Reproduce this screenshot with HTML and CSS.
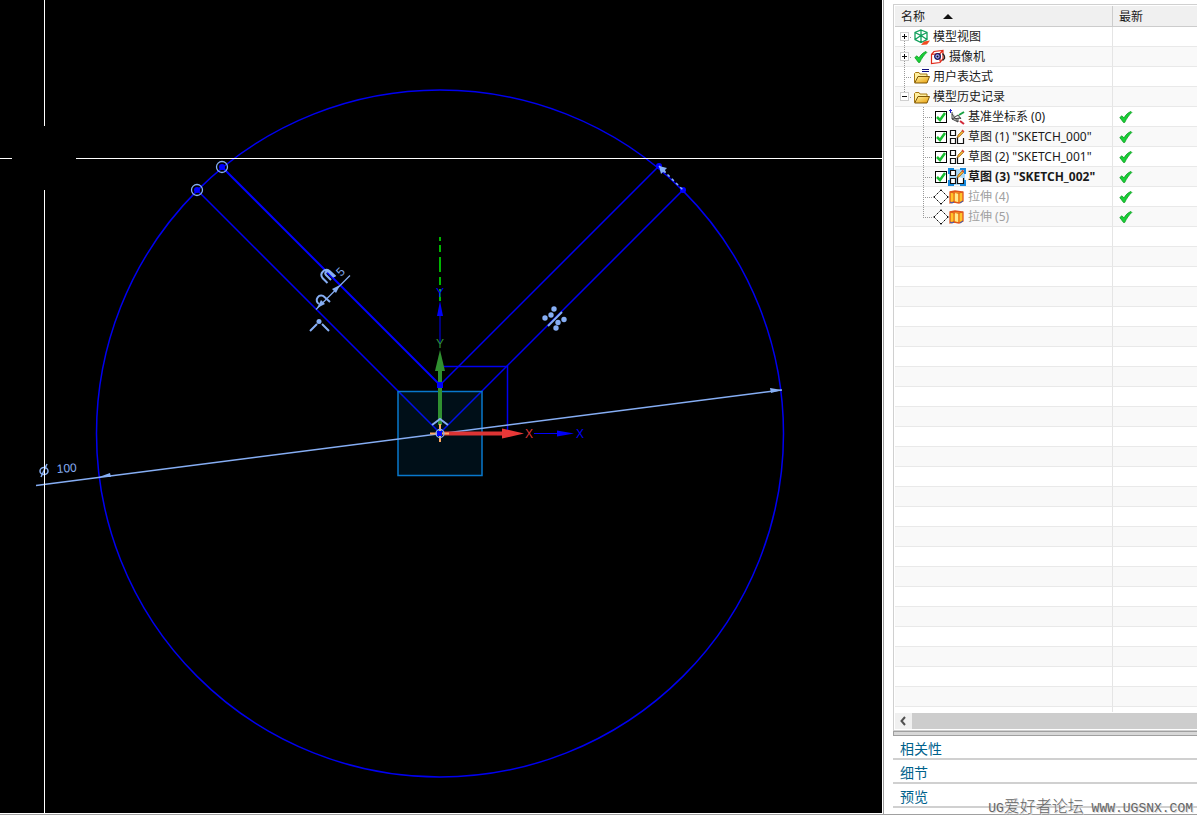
FILE: index.html
```
<!DOCTYPE html>
<html lang="zh-CN">
<head>
  <meta charset="utf-8">
  <title>部件导航器</title>
  <link rel="stylesheet" href="styles.css">
</head>
<body>
  <svg class="symbols" aria-hidden="true">
    <symbol id="tick" viewBox="0 0 14 14">
      <path d="M.8 7.500L3 5.800l2 2.200C6.500 5 9 2.500 12 1.500l.8 1C10 5 7.500 8.500 5.700 12.500H4.500z" fill="#18d038" stroke="#129a22" stroke-width=".8"/>
    </symbol>
    <symbol id="views" viewBox="0 0 16 16">
      <path d="M7 1l6 2.500v7L7 13.500l-6-3v-7zM1 3.500l6 3 6-3M7 1v12M1 10.500l6-4 6 4" fill="none" stroke="#12a05c" stroke-width="1.300"/>
      <path d="M7 16l3-3.500 6-1-3 4z" fill="#f04a20"/>
    </symbol>
    <symbol id="camera" viewBox="0 0 16 16">
      <path d="M1.500 5.500L4 2.500l9-1v8l-3 4-8.500 1zM1.500 5.500l8.500-1v8M10 4.500l3-3" fill="#fff" stroke="#e02818" stroke-width="1.200"/>
      <circle cx="7.500" cy="7.500" r="2.800" fill="#a8a8f0" stroke="#171760" stroke-width="1.300"/>
      <circle cx="7.500" cy="7.500" r="1" fill="#111"/>
      <path d="M12.500 4.500q2.500 2 2 5l-2 2" fill="none" stroke="#222" stroke-width="1.300"/>
    </symbol>
    <symbol id="folder" viewBox="0 0 16 16">
      <path d="M.5 13.500v-9l1-1H5l1 1.500h7v3" fill="#fff0a0" stroke="#a87810"/>
      <path d="M.7 14L4 7.500h11.500L13 14z" fill="url(#gold)" stroke="#7d5606"/>
    </symbol>
    <symbol id="csys" viewBox="0 0 16 16">
      <path d="M3 3v7l6 3V9M3 10l6-4 3 4M3 5l6 8M3 10l9-1" fill="#dde2de" stroke="#444"/>
      <path d="M1.500 0v4M0 1.500h3" stroke="#2020d0"/>
      <path d="M10 6l5-3" stroke="#18a040" stroke-width="2"/>
      <path d="M11 12l4 3" stroke="#d02838" stroke-width="2"/>
    </symbol>
    <symbol id="sketch" viewBox="0 0 16 16">
      <path d="M1.500 1.500h5v5h-5zM1.500 9.500h5v5h-5zM8.500 8v6.500h6V9" fill="#fff" stroke="#111" stroke-width="1.200"/>
      <path d="M8 9l1-3 4-4 1.500 1.500-4 4z" fill="#f0b030" stroke="#845018" stroke-width=".6"/>
      <path d="M12.500 1.500l1-1 2 2-1 1z" fill="#e04030"/>
    </symbol>
    <symbol id="extrude" viewBox="0 0 16 16">
      <path d="M1 3l5-1 8 1v9l-4 2-5-1-4 1z" fill="#ffc42a" stroke="#e0561c" stroke-width="1.300"/>
      <path d="M5 3v10M10 4v10M1 3l4 1 5 0 4-1" fill="none" stroke="#e0561c"/>
      <path d="M6 4l3 1v8l-3-1z" fill="#ffe890"/>
      <path d="M1 13q2 2 4 0M11 14l3-2" fill="none" stroke="#3060c0"/>
    </symbol>
    <linearGradient id="gold" x1="0" y1="0" x2="1" y2="1">
      <stop offset="0" stop-color="#fff3a0"/>
      <stop offset="1" stop-color="#e89c08"/>
    </linearGradient>
  </svg>

  <main class="workspace">
    <section class="viewport">
      <svg class="drawing" viewBox="0 0 882 813" preserveAspectRatio="xMinYMin slice" role="img" aria-label="SKETCH_002">
        <!-- 草图曲线 -->
        <g class="curve">
          <circle cx="440" cy="433.500" r="343.500"/>
          <path d="M197 190l243 243L683 190M440 385L659 166"/>
          <path class="thick" d="M222 167l218 218"/>
          <path d="M440 366.500h67.500V433"/>
        </g>
        <rect class="plane" x="398" y="391.500" width="84" height="84"/>

        <!-- 竖直参考轴 -->
        <path class="axis-dash" d="M440 237v4M440 245v7M440 257v15M440 277v8M440 289v12"/>

        <!-- 尺寸 100 -->
        <g class="dim">
          <path d="M36 485.500L782 390"/>
          <path class="solid" d="M99 477l11-4 1 4zM782 390l-12-2 1 5z"/>
          <ellipse cx="44" cy="471" rx="4" ry="3.500"/>
          <path d="M47 464l-6 13"/>
          <text x="57" y="473" transform="rotate(-4 57 473)" class="dim-text">100</text>
        </g>

        <!-- 草图坐标系 -->
        <g class="sketch-axis">
          <path d="M440 344V316M534 433.500h24"/>
          <path class="solid" d="M440 301l3 15h-6zM574 433.500l-17 3v-6z"/>
          <text x="440" y="297">Y</text>
          <text x="580" y="438">X</text>
        </g>
        <g class="y-axis">
          <path d="M440 425v-56" stroke-width="4"/>
          <path class="solid" d="M440 350l5 21h-10z"/>
          <text x="440" y="348">Y</text>
        </g>
        <g class="x-axis">
          <path d="M444 433.500h60" stroke-width="4"/>
          <path class="solid" d="M524 433.500l-22 5v-10z"/>
          <text x="529" y="438">X</text>
        </g>
        <path class="origin-cross" d="M430 433.500h19M440 424v18"/>
        <path class="mark" d="M432 425l8-6 8 6"/>
        <circle class="ring" cx="440" cy="433.500" r="4"/>

        <!-- 端点 -->
        <g class="point">
          <rect x="437" y="382" width="6" height="6"/>
          <rect x="437" y="431" width="5" height="5"/>
          <circle cx="222" cy="167" r="3"/>
          <circle cx="197" cy="190" r="3"/>
          <circle cx="659" cy="166" r="3"/>
          <circle cx="683" cy="190" r="3"/>
        </g>
        <circle class="ring" cx="222" cy="167" r="5.500"/>
        <circle class="ring" cx="197" cy="190" r="5.500"/>
        <path class="drag" d="M659 166l24 24"/>
        <path class="solid-mark" d="M659 166l8 2-2 2 1 3-3-1-2 2z"/>

        <!-- 约束符号与尺寸 5 -->
        <g class="mark">
          <path class="thin" d="M316 309.500L350 275.500"/>
          <path class="solid-mark" d="M340 285l-4 8-4-4zM317 308l4-8 4 4z"/>
          <path d="M327.500 283l-5-5a5 5 0 0 1 7-7l6 5.500M331 280l-5-5a2 2 0 0 1 3-3l5 5"/>
          <path d="M319 304a4.500 4.500 0 1 1 5.500-7l5.500 5"/>
          <path d="M310 331l7-7M322 324l7 7"/>
          <circle class="solid-mark" cx="319" cy="321.500" r="2.500"/>
          <path d="M548 326l14-14"/>
          <g class="solid-mark">
            <circle cx="545" cy="318" r="2.700"/>
            <circle cx="551" cy="315" r="2.700"/>
            <circle cx="554" cy="309" r="2.700"/>
            <circle cx="556" cy="328" r="2.700"/>
            <circle cx="558" cy="322.500" r="2.700"/>
            <circle cx="564" cy="319.500" r="2.700"/>
          </g>
        </g>
        <text x="341" y="277" transform="rotate(-45 341 277)" class="dim-text">5</text>

        <!-- 十字光标 -->
        <path class="cursor" d="M44.500 0v126M44.500 190v623M0 158.500h12M76 158.500h806"/>
      </svg>
    </section>

    <aside class="navigator">
      <div class="tree-box">
        <div class="tree-scroll">
          <table class="tree">
            <colgroup><col class="col-name"><col></colgroup>
            <thead>
              <tr>
                <th><button class="sort" type="button">名称 <span class="sort-arrow"></span></button></th>
                <th>最新</th>
              </tr>
            </thead>
            <tbody>
              <tr><td><div class="node">
                <span class="branch first"><button class="expander plus" type="button" aria-label="展开 模型视图"></button></span>
                <svg class="icon"><use href="#views"/></svg><span class="label">模型视图</span>
              </div></td><td></td></tr>
              <tr><td><div class="node">
                <span class="branch"><button class="expander plus" type="button" aria-label="展开 摄像机"></button></span>
                <svg class="tick"><use href="#tick"/></svg><svg class="icon"><use href="#camera"/></svg><span class="label">摄像机</span>
              </div></td><td></td></tr>
              <tr><td><div class="node">
                <span class="branch"></span>
                <svg class="icon" viewBox="0 0 16 16"><use href="#folder"/><path d="M8 .5h7M8 2.500h7" stroke="#101080"/></svg><span class="label">用户表达式</span>
              </div></td><td></td></tr>
              <tr><td><div class="node">
                <span class="branch last"><button class="expander" type="button" aria-label="折叠 模型历史记录"></button></span>
                <svg class="icon"><use href="#folder"/></svg><span class="label">模型历史记录</span>
              </div></td><td></td></tr>
              <tr><td><div class="node child">
                <span class="branch"></span>
                <input class="check" type="checkbox" id="f0" checked>
                <svg class="icon"><use href="#csys"/></svg><label class="label" for="f0">基准坐标系 (0)</label>
              </div></td><td><svg class="tick"><use href="#tick"/></svg></td></tr>
              <tr><td><div class="node child">
                <span class="branch"></span>
                <input class="check" type="checkbox" id="f1" checked>
                <svg class="icon"><use href="#sketch"/></svg><label class="label" for="f1">草图 (1) "SKETCH_000"</label>
              </div></td><td><svg class="tick"><use href="#tick"/></svg></td></tr>
              <tr><td><div class="node child">
                <span class="branch"></span>
                <input class="check" type="checkbox" id="f2" checked>
                <svg class="icon"><use href="#sketch"/></svg><label class="label" for="f2">草图 (2) "SKETCH_001"</label>
              </div></td><td><svg class="tick"><use href="#tick"/></svg></td></tr>
              <tr class="active"><td><div class="node child">
                <span class="branch"></span>
                <input class="check" type="checkbox" id="f3" checked>
                <svg class="icon"><use href="#sketch"/></svg><label class="label" for="f3">草图 (3) "SKETCH_002"</label>
              </div></td><td><svg class="tick"><use href="#tick"/></svg></td></tr>
              <tr class="inactive"><td><div class="node child">
                <span class="branch"></span>
                <input class="check diamond" type="checkbox" id="f4">
                <svg class="icon"><use href="#extrude"/></svg><label class="label" for="f4">拉伸 (4)</label>
              </div></td><td><svg class="tick"><use href="#tick"/></svg></td></tr>
              <tr class="inactive"><td><div class="node child">
                <span class="branch last"></span>
                <input class="check diamond" type="checkbox" id="f5">
                <svg class="icon"><use href="#extrude"/></svg><label class="label" for="f5">拉伸 (5)</label>
              </div></td><td><svg class="tick"><use href="#tick"/></svg></td></tr>
              <tr><td></td><td></td></tr>
              <tr><td></td><td></td></tr>
              <tr><td></td><td></td></tr>
              <tr><td></td><td></td></tr>
              <tr><td></td><td></td></tr>
              <tr><td></td><td></td></tr>
              <tr><td></td><td></td></tr>
              <tr><td></td><td></td></tr>
              <tr><td></td><td></td></tr>
              <tr><td></td><td></td></tr>
              <tr><td></td><td></td></tr>
              <tr><td></td><td></td></tr>
              <tr><td></td><td></td></tr>
              <tr><td></td><td></td></tr>
              <tr><td></td><td></td></tr>
              <tr><td></td><td></td></tr>
              <tr><td></td><td></td></tr>
              <tr><td></td><td></td></tr>
              <tr><td></td><td></td></tr>
              <tr><td></td><td></td></tr>
              <tr><td></td><td></td></tr>
              <tr><td></td><td></td></tr>
              <tr><td></td><td></td></tr>
              <tr><td></td><td></td></tr>
              <tr><td></td><td></td></tr>
            </tbody>
          </table>
        </div>
        <div class="scrollbar">
          <button class="scroll-left" type="button" aria-label="向左滚动">
            <svg viewBox="0 0 16 16"><path d="M10 4L6.500 8l3.500 4" fill="none" stroke="#505050" stroke-width="2"/></svg>
          </button>
          <div class="thumb"></div>
        </div>
      </div>
      <div class="splitter"></div>
      <button class="section" type="button">相关性</button>
      <button class="section" type="button">细节</button>
      <button class="section" type="button">预览</button>
    </aside>
  </main>
  <div class="watermark"><span class="mono">UG</span>爱好者论坛<span class="mono"> WWW.UGSNX.COM</span></div>
</body>
</html>
```
FILE: styles.css
```
* {
  box-sizing: border-box;
}
html, body {
  margin: 0;
  padding: 0;
}
body {
  position: relative;
  height: 100vh;
  padding-bottom: 3px;
  overflow: hidden;
  background: #fff;
  color: #1a1a1a;
  font: 12px/19px "Noto Sans", "Noto Sans CJK SC", sans-serif;
}
button {
  margin: 0;
  padding: 0;
  border: 0;
  background: none;
  color: inherit;
  font: inherit;
  text-align: left;
}
.symbols {
  position: absolute;
  width: 0;
  height: 0;
}
.workspace {
  display: flex;
  height: 100%;
  border-bottom: 1px solid #a0a0a0;
}

/* 图形区 */
.viewport {
  flex: 1;
  min-width: 0;
  margin: 0 1px 1px 0;
  overflow: hidden;
  background: #000;
}
.drawing {
  display: block;
  width: 100%;
  height: 100%;
}
.drawing path, .drawing circle, .drawing ellipse {
  fill: none;
}
.drawing text {
  stroke: none;
  font: 12px "Liberation Sans", sans-serif;
  text-anchor: middle;
}
.drawing .curve {
  stroke: #0000f0;
  stroke-width: 1.5;
}
.drawing .thick {
  stroke: #00f;
  stroke-width: 2;
}
.plane {
  fill: rgba(0, 120, 200, .12);
  stroke: #0878cc;
  stroke-width: 1.5;
}
.axis-dash {
  stroke: #00b400;
  stroke-width: 2;
}
.dim, .mark, .ring {
  stroke: #86aef4;
  stroke-width: 1.5;
}
.mark {
  stroke-width: 2;
}
.mark .thin {
  stroke-width: 1.3;
}
.drawing .dim .solid, .drawing .solid-mark, .drawing .solid-mark circle {
  fill: #86aef4;
  stroke: none;
}
.drawing .dim-text {
  fill: #86aef4;
  font: 12px "Liberation Sans Narrow", "Liberation Sans", sans-serif;
  text-anchor: start;
}
.ring {
  stroke-width: 1.3;
}
.sketch-axis {
  fill: #0000f8;
  stroke: #0000f8;
}
.drawing .sketch-axis .solid {
  fill: #0000f8;
  stroke: none;
}
.y-axis {
  fill: #309030;
  stroke: #309030;
}
.drawing .y-axis .solid {
  fill: #309030;
  stroke: none;
}
.x-axis {
  fill: #dc3434;
  stroke: #dc3434;
}
.drawing .x-axis .solid {
  fill: #e83838;
  stroke: none;
}
.origin-cross {
  stroke: #ffa860;
  stroke-width: 2;
}
.drawing .point rect, .drawing .point circle {
  fill: #00f;
}
.drag {
  stroke: #86aef4;
  stroke-width: 1.5;
  stroke-dasharray: 3 3;
}
.cursor {
  stroke: #fff;
}

/* 导航器 */
.navigator {
  display: flex;
  flex-direction: column;
  width: 314px;
  padding: 4px 0 6px 9px;
  border-left: 1px solid #a0a0a0;
}
.tree-box {
  display: flex;
  flex: 1;
  flex-direction: column;
  min-height: 0;
  padding: 1px 0 1px 1px;
  border: 1px solid #d0d0d0;
  border-right: 0;
}
.tree-scroll {
  flex: 1;
  min-height: 0;
  margin-bottom: 1px;
  overflow: hidden;
}
.tree {
  width: 100%;
  border-collapse: separate;
  border-spacing: 0;
  table-layout: fixed;
}
.col-name {
  width: 218px;
}
.tree th {
  height: 21px;
  padding: 0 6px;
  border-right: 1px solid #ccc;
  border-bottom: 1px solid #ccc;
  background: #f0f0f0;
  font-weight: normal;
  text-align: left;
}
.tree td {
  height: 20px;
  padding: 0;
  border-right: 1px solid #e5e5e5;
  border-bottom: 1px solid #e9e9e9;
}
.tree th:last-child, .tree td:last-child {
  border-right: 0;
}
.tree td:last-child {
  padding-left: 6px;
}
.tree tbody tr:nth-child(even) {
  background: #f9f9f9;
}
.sort {
  display: flex;
  align-items: center;
  gap: 18px;
}
.sort-arrow {
  border: 5px solid transparent;
  border-top: 0;
  border-bottom-color: #111;
}
.node {
  display: flex;
  align-items: center;
  gap: 2px;
  height: 19px;
  white-space: nowrap;
}
.child {
  padding-left: 19px;
}
.branch {
  display: flex;
  align-items: center;
  width: 17px;
  height: 19px;
  padding-left: 5px;
  background:
    repeating-linear-gradient(#999 0 1px, transparent 1px 2px) 9px 0 / 1px 100% no-repeat,
    repeating-linear-gradient(90deg, #999 0 1px, transparent 1px 2px) 9px 10px / 10px 1px no-repeat;
}
.child .branch {
  width: 19px;
}
.branch.first {
  background-position: 9px 10px, 9px 10px;
}
.branch.last {
  background-size: 1px 10px, 10px 1px;
}
.expander {
  width: 9px;
  height: 9px;
  border: 1px solid #d0d0d0;
  background: linear-gradient(#111, #111) center / 5px 1px no-repeat, #fff;
}
.plus {
  background: linear-gradient(#111, #111) center / 5px 1px no-repeat, linear-gradient(#111, #111) center / 1px 5px no-repeat, #fff;
}
.icon {
  flex: none;
  width: 16px;
  height: 16px;
}
.tick {
  display: block;
  flex: none;
  width: 14px;
  height: 14px;
}
.label {
  padding-left: 1px;
}
.check {
  flex: none;
  width: 12px;
  height: 12px;
  margin: 0;
  appearance: none;
  border: 1px solid #000;
  background: #fff;
}
.check:checked {
  background: #fff url("data:image/svg+xml,%3Csvg xmlns='http://www.w3.org/2000/svg' viewBox='0 0 10 10'%3E%3Cpath d='M1 5l3 3 5-7' fill='none' stroke='%2318c030' stroke-width='2.500'/%3E%3C/svg%3E");
}
.diamond {
  border-style: dashed;
  transform: rotate(45deg) scale(.9);
}
.active .label {
  font-weight: bold;
}
.active .icon {
  outline: 2px dashed #1488dc;
  outline-offset: -1px;
  background: #a8d8f8;
}
.inactive .label {
  color: #a0a0a0;
}
.scrollbar {
  display: flex;
  height: 16px;
  background: #f0f0f0;
}
.scroll-left {
  width: 17px;
}
.scroll-left svg {
  display: block;
  width: 16px;
  height: 16px;
}
.thumb {
  flex: 1;
  background: #cdcdcd;
}
.splitter {
  height: 5px;
  border: 1px solid #a0a0a0;
  border-right: 0;
  background: #d8d8d8;
}
.section {
  height: 24px;
  padding: 2px 0 0 7px;
  border-bottom: 2px solid #d0d0d0;
  color: #00628c;
  font-size: 14px;
}
.watermark {
  position: absolute;
  right: 4px;
  bottom: 2px;
  color: #666;
  font: 16px/20px "Noto Sans CJK SC", sans-serif;
  font-weight: 300;
  white-space: pre;
  text-shadow: 1px 1px 0 #ddd;
}
.mono {
  font: 13px "Liberation Mono", monospace;
}
```
